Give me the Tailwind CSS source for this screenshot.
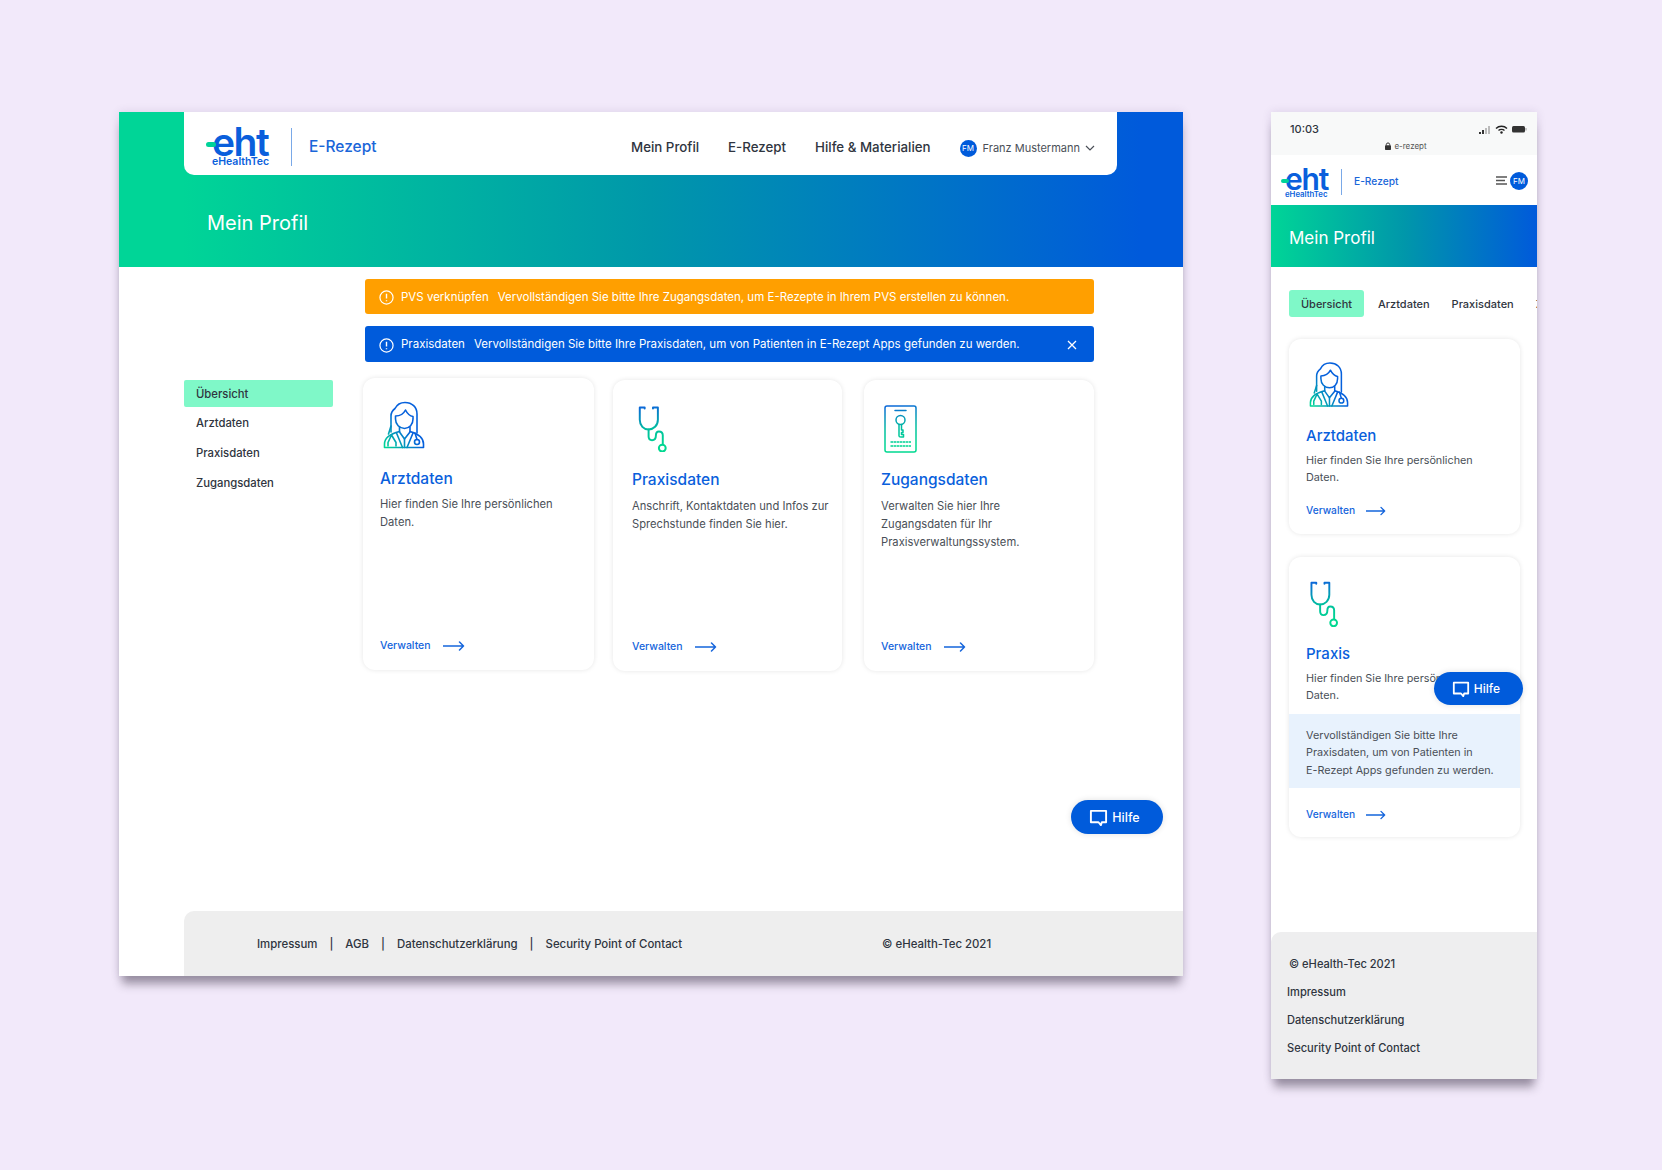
<!DOCTYPE html>
<html lang="de">
  <head>
    <meta charset="UTF-8" />
    <meta name="viewport" content="width=device-width, initial-scale=1.0" />
    <title>E-Rezept Mein Profil</title>
    <script src="https://cdn.jsdelivr.net/npm/@tailwindcss/browser@4"></script>
  </head>
  <body class="m-0 min-h-[1170px] overflow-hidden bg-[#f2e9fa] font-[Inter,sans-serif] text-[#2f3540] antialiased">
    <!-- shared icons -->
    <svg class="absolute h-0 w-0" aria-hidden="true">
      <defs>
        <linearGradient id="g-doc" gradientUnits="userSpaceOnUse" x1="3" y1="46" x2="24" y2="28">
          <stop offset="0" stop-color="#00d597" />
          <stop offset="1" stop-color="#0560dc" />
        </linearGradient>
        <linearGradient id="g-down" gradientUnits="userSpaceOnUse" x1="0" y1="2" x2="6" y2="44">
          <stop offset="0" stop-color="#0b68d8" />
          <stop offset="0.55" stop-color="#00bf9f" />
          <stop offset="1" stop-color="#00d890" />
        </linearGradient>
        <symbol id="i-doctor" viewBox="0 0 42 48">
          <g fill="none" stroke="url(#g-doc)" stroke-width="1.600" stroke-linecap="round" stroke-linejoin="round">
            <path d="M8 31V15C8 11 10 9 12 7.500C14 3.500 18 1.500 22 1.500C29 1.500 34 6 34 13V32" />
            <path d="M5.500 33L8 25" />
            <path d="M12.500 15C17 15 20.500 13 22.500 9C24.500 13 27 15 30 15.500V18C30 23.500 26.500 27.500 21.500 27.500C16.500 27.500 12.500 23.500 12.500 18Z" />
            <path d="M16.500 26V31L21.500 38L27 31V26" />
            <path d="M1.500 46.500V43C1.500 37 7 33 16.500 30.500M27 30.500C36 33 40.500 37 40.500 43V46.500H1.500" />
            <path d="M13.500 32L19.500 46.500M30 32L24 46.500M21.500 38V46.500" />
            <path d="M8.500 34L5 41.500V45M8.500 34L13 41.500V45" />
            <circle cx="34" cy="41" r="2.500" />
            <path d="M32 32L34 38.500" />
          </g>
        </symbol>
        <symbol id="i-stetho" viewBox="0 0 29 47">
          <g fill="none" stroke="url(#g-down)" stroke-width="2" stroke-linecap="round" stroke-linejoin="round">
            <path d="M6.500 2.500V1.500H1.500V14C1.500 20 5.500 24 10.500 24C15.500 24 20 20 20 14V1.500H15V2.500" />
            <path d="M10.500 24V31C10.500 34 12 35 14 35C16 35 18 33.500 18 30C18 27 19 26 21 26C23.500 26 25 27.500 25 30V39" />
            <circle cx="24.500" cy="43" r="3.500" />
          </g>
        </symbol>
        <symbol id="i-key" viewBox="0 0 33 48">
          <g fill="none" stroke="url(#g-down)" stroke-width="1.500" stroke-linecap="round" stroke-linejoin="round">
            <rect x="1" y="1" width="31" height="46" rx="2" />
            <path d="M11 5.500H22" />
            <circle cx="16.500" cy="15" r="4.500" />
            <path d="M15 19.500V31C15 32 16 32 17 32H19.500V29.500H17.500V27.500H19V25H17.500V19.500" />
            <path d="M6.500 37H27M6.500 41H27" stroke-width="1.500" stroke-linecap="butt" stroke-dasharray="2.500 0.500" />
          </g>
        </symbol>
        <symbol id="i-arrow" viewBox="0 0 22 10">
          <path d="M0 5H20.500M16.500 1L20.500 5L16.500 9" fill="none" stroke="#1565dc" stroke-width="1.500" stroke-linecap="round" stroke-linejoin="round" />
        </symbol>
        <symbol id="i-chat" viewBox="0 0 20 20">
          <path d="M2 3H18V15H13.500L12.500 18L10 15H2Z" fill="none" stroke="#fff" stroke-width="2" stroke-linejoin="round" />
        </symbol>
        <symbol id="i-info" viewBox="0 0 16 16">
          <circle cx="8" cy="8" r="7" fill="none" stroke="#fff" stroke-width="1.300" />
          <path d="M8 4V9M8 11V12" stroke="#fff" stroke-width="1.500" />
        </symbol>
      </defs>
    </svg>

    <main class="flex items-start pl-[119px] pt-[112px]">
      <!-- desktop window -->
      <section class="relative flex h-[864px] w-[1064px] flex-col bg-white shadow-[0_11px_9px_-3px_rgba(40,30,50,0.42),0_0_9px_rgba(60,40,90,0.12)]">
        <div class="h-[155px] bg-linear-to-r/srgb from-[#00d597] from-[6%] via-[#0097aa] via-[50%] to-[#005adb] to-[96%]">
          <header class="ml-[65px] flex h-[63px] w-[933px] items-center justify-between rounded-b-[10px] bg-white pl-[22px] pr-[22px] pt-[6px]">
            <div class="flex items-center">
              <div class="relative -mt-[2px] h-[38px] w-[64px] pl-[6px] text-[#0a5fdc]">
                <span class="absolute left-0 top-[15px] h-[5px] w-[10px] rounded-full bg-[#00d39a]"></span>
                <div class="text-[39px] font-semibold leading-[30px] tracking-[-1.500px]">eht</div>
                <div class="text-[10.500px] font-semibold leading-[10px]">eHealthTec</div>
              </div>
              <span class="ml-[21px] h-[38px] w-px bg-[#7aa9e8]"></span>
              <span class="ml-[17px] text-[15.500px] font-medium text-[#1a66d9]">E-Rezept</span>
            </div>
            <nav class="mt-[3px] flex items-center gap-[29px] text-[13.300px] font-medium">
              <a>Mein Profil</a>
              <a>E-Rezept</a>
              <a>Hilfe &amp; Materialien</a>
              <div class="flex items-center text-[11px] font-normal text-[#4a4f57]">
                <span class="flex h-[17px] w-[17px] items-center justify-center rounded-full bg-[#005bdb] text-[8px] text-white">FM</span>
                <span class="ml-[6px]">Franz Mustermann</span>
                <svg class="ml-[5px]" width="10" height="6" viewBox="0 0 10 6"><path d="M1 1L5 5L9 1" fill="none" stroke="#4a4f57" stroke-width="1.200" /></svg>
              </div>
            </nav>
          </header>
          <h1 class="ml-[88px] mt-[35px] text-[20px] font-normal leading-[26px] text-white">Mein Profil</h1>
        </div>

        <div class="ml-[65px] flex flex-1">
          <aside class="mt-[113px] w-[149px] text-[11.300px] font-medium">
            <div class="flex h-[27px] items-center rounded-[2px] bg-[#7ff8c8] pl-[12px] pt-[1px]">Übersicht</div>
            <div class="mt-[2px] flex h-[28px] items-center pl-[12px]">Arztdaten</div>
            <div class="mt-[2px] flex h-[28px] items-center pl-[12px]">Praxisdaten</div>
            <div class="mt-[2px] flex h-[28px] items-center pl-[12px]">Zugangsdaten</div>
          </aside>
          <div class="ml-[32px] w-[729px] pt-[12px]">
            <div class="flex h-[35px] items-center rounded-[3px] bg-[#ff9f00] pl-[14px] pt-[2px] text-[11.500px] text-white">
              <svg class="mr-[7px] shrink-0" width="15" height="15"><use href="#i-info" /></svg>
              <span class="mr-[9px]">PVS verknüpfen</span>
              <span>Vervollständigen Sie bitte Ihre Zugangsdaten, um E-Rezepte in Ihrem PVS erstellen zu können.</span>
            </div>
            <div class="mt-[12px] flex h-[36px] items-center rounded-[3px] bg-[#005bdb] pl-[14px] pr-[17px] pt-[2px] text-[11.500px] text-white">
              <svg class="mr-[7px] shrink-0" width="15" height="15"><use href="#i-info" /></svg>
              <span class="mr-[9px]">Praxisdaten</span>
              <span>Vervollständigen Sie bitte Ihre Praxisdaten, um von Patienten in E-Rezept Apps gefunden zu werden.</span>
              <svg class="ml-auto" width="10" height="10" viewBox="0 0 10 10"><path d="M1 1L9 9M9 1L1 9" stroke="#fff" stroke-width="1.300" /></svg>
            </div>

            <div class="-ml-[2px] mt-[18px] flex items-start">
              <article class="-mt-[2px] flex h-[292px] w-[231px] flex-col rounded-[12px] bg-white px-[17px] pb-[15px] pt-[23px] shadow-[0_0_5px_rgba(0,0,0,0.10)]">
                <svg class="ml-[3px] shrink-0" width="42" height="48"><use href="#i-doctor" /></svg>
                <h2 class="mt-[18px] text-[15.500px] font-medium leading-[24px] text-[#0a5fdc]">Arztdaten</h2>
                <p class="mt-[4px] text-[11.200px] leading-[18px] text-[#4a4f57]">Hier finden Sie Ihre persönlichen Daten.</p>
                <a class="mt-auto flex h-[18px] items-center text-[10.500px] font-medium text-[#1565dc]">Verwalten<svg class="ml-[12px]" width="22" height="10"><use href="#i-arrow" /></svg></a>
              </article>
              <article class="ml-[19px] flex h-[291px] w-[229px] flex-col rounded-[12px] bg-white pl-[19px] pr-[6px] pb-[15px] pt-[24px] shadow-[0_0_5px_rgba(0,0,0,0.10)]">
                <svg class="ml-[6px] mt-[2px] h-[46px] shrink-0" width="29" height="47"><use href="#i-stetho" /></svg>
                <h2 class="mt-[16px] text-[15.500px] font-medium leading-[24px] text-[#0a5fdc]">Praxisdaten</h2>
                <p class="mt-[5px] text-[11.200px] leading-[18px] text-[#4a4f57]">Anschrift, Kontaktdaten und Infos zur Sprechstunde finden Sie hier.</p>
                <a class="mt-auto flex h-[18px] items-center text-[10.500px] font-medium text-[#1565dc]">Verwalten<svg class="ml-[12px]" width="22" height="10"><use href="#i-arrow" /></svg></a>
              </article>
              <article class="ml-[22px] flex h-[291px] w-[230px] flex-col rounded-[12px] bg-white pl-[17px] pr-[30px] pb-[15px] pt-[25px] shadow-[0_0_5px_rgba(0,0,0,0.10)]">
                <svg class="ml-[3px] shrink-0" width="33" height="48"><use href="#i-key" /></svg>
                <h2 class="mt-[15px] text-[15.500px] font-medium leading-[24px] text-[#0a5fdc]">Zugangsdaten</h2>
                <p class="mt-[5px] text-[11.200px] leading-[18px] text-[#4a4f57]">Verwalten Sie hier Ihre Zugangsdaten für Ihr Praxisverwaltungssystem.</p>
                <a class="mt-auto flex h-[18px] items-center text-[10.500px] font-medium text-[#1565dc]">Verwalten<svg class="ml-[12px]" width="22" height="10"><use href="#i-arrow" /></svg></a>
              </article>
            </div>
          </div>
        </div>

        <footer class="ml-[65px] flex h-[65px] shrink-0 items-center rounded-tl-[10px] bg-[#eeeeee] pl-[73px] pt-[2px] text-[11.400px] font-medium">
          <span>Impressum</span>
          <span class="mx-[12px]">|</span>
          <span>AGB</span>
          <span class="mx-[12px]">|</span>
          <span>Datenschutzerklärung</span>
          <span class="mx-[12px]">|</span>
          <span>Security Point of Contact</span>
          <span class="ml-[200px]">© eHealth-Tec 2021</span>
        </footer>

        <button class="absolute left-[952px] top-[688px] flex h-[34px] w-[92px] items-center justify-center rounded-full bg-[#005bdb] pr-[5px] pt-[3px] text-[12.500px] font-medium text-white shadow-[0_0_6px_rgba(0,0,0,0.12)]">
          <svg class="-mt-[2px] mr-[4px]" width="19" height="19"><use href="#i-chat" /></svg>Hilfe
        </button>
      </section>

      <!-- mobile window -->
      <section class="relative ml-[88px] flex h-[967px] w-[266px] flex-col overflow-hidden bg-white shadow-[0_11px_9px_-3px_rgba(40,30,50,0.42),0_0_9px_rgba(60,40,90,0.12)]">
        <div class="h-[43px] shrink-0 bg-[#f8f9f9] pl-[19px] pr-[10px] pt-[10px]">
          <div class="flex h-[14px] items-center justify-between">
            <span class="text-[11px] font-medium">10:03</span>
            <svg width="48" height="10" viewBox="0 0 48 10">
              <path d="M0 8h2v2H0zM3 6h2v4H3z" fill="#333" /><path d="M6 4h2v6H6zM9 2h2v8H9z" fill="#bbb" />
              <path d="M17 4.500C20 1.500 25 1.500 28 4.500M19.500 6.500C21 5 24 5 25.500 6.500" fill="none" stroke="#222" stroke-width="1.400" /><circle cx="22.500" cy="8.500" r="1.200" fill="#222" />
              <rect x="33" y="2" width="13" height="6.500" rx="1.500" fill="#333" /><rect x="46.500" y="4" width="1" height="2.500" fill="#999" />
            </svg>
          </div>
          <div class="mt-[4px] flex items-center justify-center pr-[5px] text-[8px] text-[#555]">
            <svg class="mr-[3px]" width="6" height="8" viewBox="0 0 6 8"><path d="M1.300 3.500V2.300C1.300 0.500 4.700 0.500 4.700 2.300V3.500" fill="none" stroke="#333" /><rect y="3.300" width="6" height="4.700" rx="0.700" fill="#333" /></svg>
            e-rezept
          </div>
        </div>
        <header class="flex h-[50px] shrink-0 items-center pl-[10px] pr-[9px] pt-[3px]">
          <div class="relative h-[30px] w-[48px] pl-[4px] text-[#0a5fdc]">
            <span class="absolute left-0 top-[12px] h-[4px] w-[8px] rounded-full bg-[#00d39a]"></span>
            <div class="text-[30px] font-semibold leading-[24px] tracking-[-1.200px]">eht</div>
            <div class="text-[7.800px] font-semibold leading-[7px]">eHealthTec</div>
          </div>
          <span class="ml-[12px] h-[26px] w-px bg-[#7aa9e8]"></span>
          <span class="ml-[12px] text-[10.200px] font-medium text-[#1a66d9]">E-Rezept</span>
          <svg class="ml-auto -mt-[2px]" width="12" height="9" viewBox="0 0 12 9"><path d="M0 1H11M0 4.500H9M0 8H11" stroke="#555" stroke-width="1.400" /></svg>
          <span class="-mt-[2px] ml-[2px] flex h-[18px] w-[18px] items-center justify-center rounded-full bg-[#005bdb] text-[8px] text-white">FM</span>
        </header>
        <div class="flex h-[62px] shrink-0 items-center bg-linear-to-r/srgb from-[#00d597] via-[#0097aa] to-[#005adb] pl-[18px] pt-[5px] text-[17px] text-white">Mein Profil</div>

        <div class="relative flex-1 px-[18px]">
          <nav class="mt-[23px] flex h-[27px] items-center whitespace-nowrap pt-[1px] text-[11px] font-medium">
            <span class="-mt-[1px] flex h-[27px] w-[75px] shrink-0 items-center justify-center rounded-[3px] bg-[#7ff8c8] pt-[1px]">Übersicht</span>
            <span class="ml-[14px] shrink-0">Arztdaten</span>
            <span class="ml-[22px] shrink-0">Praxisdaten</span>
            <span class="ml-[22px] shrink-0">Zugangsdaten</span>
          </nav>

          <article class="mt-[22px] flex h-[195px] w-[231px] flex-col rounded-[12px] bg-white pb-[14px] pl-[17px] pr-[12px] pt-[22px] shadow-[0_0_5px_rgba(0,0,0,0.10)]">
            <svg class="ml-[3px] shrink-0" width="40" height="47"><use href="#i-doctor" /></svg>
            <h2 class="mt-[17px] text-[15px] font-medium leading-[22px] text-[#0a5fdc]">Arztdaten</h2>
            <p class="mt-[5px] text-[10.800px] leading-[17px] text-[#4a4f57]">Hier finden Sie Ihre persönlichen Daten.</p>
            <a class="mt-auto flex h-[18px] items-center text-[10.200px] font-medium text-[#1565dc]">Verwalten<svg class="ml-[11px]" width="20" height="10"><use href="#i-arrow" /></svg></a>
          </article>

          <article class="mt-[23px] flex h-[280px] w-[231px] flex-col overflow-hidden rounded-[12px] bg-white pb-[13px] pt-[24px] shadow-[0_0_5px_rgba(0,0,0,0.10)]">
            <svg class="ml-[21px] shrink-0" width="28" height="46"><use href="#i-stetho" /></svg>
            <h2 class="ml-[17px] mt-[16px] text-[15px] font-medium leading-[22px] text-[#0a5fdc]">Praxis</h2>
            <p class="mx-[17px] mt-[5px] text-[10.800px] leading-[17px] text-[#4a4f57]">Hier finden Sie Ihre persönlichen Daten.</p>
            <p class="mt-[10px] h-[74px] bg-[#e8f2fd] pl-[17px] pr-[10px] pt-[13px] text-[10.800px] leading-[17.300px] text-[#4a4f57]">Vervollständigen Sie bitte Ihre Praxisdaten, um von Patienten in <span class="whitespace-nowrap">E-Rezept</span> Apps gefunden zu werden.</p>
            <a class="ml-[17px] mt-auto flex h-[18px] items-center text-[10.200px] font-medium text-[#1565dc]">Verwalten<svg class="ml-[11px]" width="20" height="10"><use href="#i-arrow" /></svg></a>
          </article>
        </div>

        <footer class="flex h-[147px] shrink-0 flex-col rounded-tl-[10px] bg-[#eeeeef] pl-[16px] pt-[23px] text-[11.100px] font-medium leading-[18px]">
          <span class="ml-[2px]">© eHealth-Tec 2021</span>
          <span class="mt-[10px]">Impressum</span>
          <span class="mt-[10px]">Datenschutzerklärung</span>
          <span class="mt-[10px]">Security Point of Contact</span>
        </footer>

        <button class="absolute left-[163px] top-[560px] flex h-[33px] w-[89px] items-center justify-center rounded-full bg-[#005bdb] pr-[5px] pt-[1px] text-[12px] font-medium text-white shadow-[0_0_6px_rgba(0,0,0,0.12)]">
          <svg class="mr-[4px]" width="18" height="18"><use href="#i-chat" /></svg>Hilfe
        </button>
      </section>
    </main>
  </body>
</html>
